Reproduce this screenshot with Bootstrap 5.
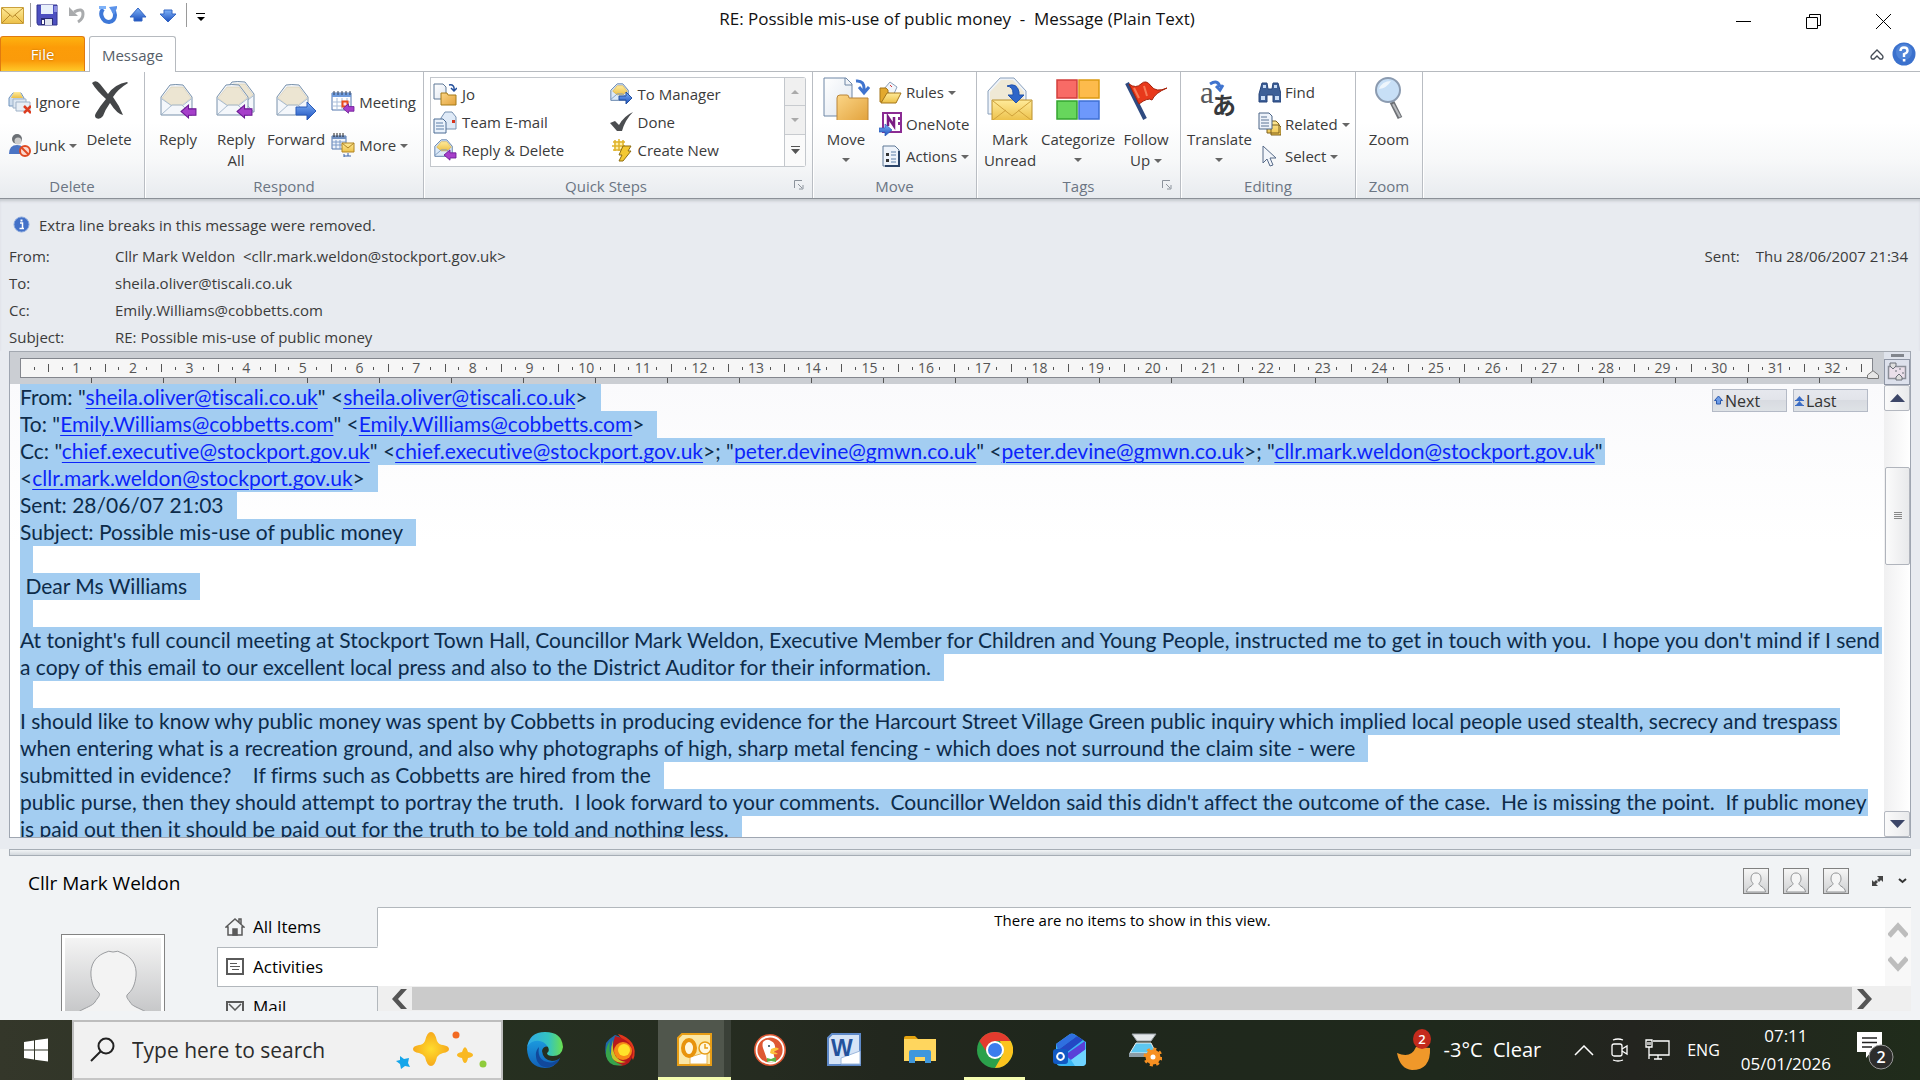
<!DOCTYPE html>
<html lang="en">
<head>
<meta charset="utf-8">
<meta name="viewport" content="width=device-width, initial-scale=1">
<title>RE: Possible mis-use of public money - Message (Plain Text)</title>
<link href="https://cdn.jsdelivr.net/npm/bootstrap@5.3.0/dist/css/bootstrap.min.css" rel="stylesheet">
<style>
body{font:15px/20px "Open Sans","Noto Sans",sans-serif;color:#3b3b3b;background:#fff;height:100vh;min-height:700px;overflow:hidden}
button{font:inherit;color:inherit;background:none;border:0;padding:0}
svg{display:block;flex:none}
.titlebar{height:36px}
.titlebar h1{font-size:17px;line-height:24px;color:#111;margin:0;padding:7px 6px 0 0}
.qat{padding:0 0 0 1px;height:30px;gap:5px}
.qat-tools{gap:10px;margin:0 3px 0 5px}
.qat i{width:1px;height:24px;background:#9a9a9a}
.win{padding-right:28px;padding-top:6px;gap:53px}
.tabs{height:36px;border-bottom:1px solid #b6babf}
.tab-file{width:85px;height:35px;color:#fff;border:1px solid #e07a10;border-bottom:0;border-radius:3px 3px 0 0;background:linear-gradient(#fdb310,#fc9c08 30%,#fb9b0a 70%,#ffc928);text-shadow:0 0 2px #a55a00}
.tab-msg{width:87px;height:36px;margin-left:4px;color:#565e69;background:#fff;border:1px solid #b6babf;border-bottom:0;border-radius:3px 3px 0 0}
.ribbon{height:127px;background:linear-gradient(#fff,#fff 40%,#f7f8f9 70%,#e8ebef);border-bottom:1px solid #8b9097}
.grp{border-right:1px solid #b9bdc3;box-shadow:1px 0 #fff}
.grp-label{height:22px;color:#6b7583;text-align:center;position:relative}
.launch{position:absolute;right:8px;top:4px}
.g-del{width:145px}.g-resp{width:279px}.g-quick{width:389px}.g-move{width:164px}.g-tags{width:204px}.g-edit{width:175px}.g-zoom{width:67px}
.big{min-width:58px;padding:4px 2px 0;line-height:21px}
.big svg{margin-bottom:9px}
.sm{gap:4px;height:32px;white-space:nowrap}
.two .sm{height:43px}
.two{padding-top:8px}.three{padding-top:4px}
.car{display:inline-block;border:4px solid transparent;border-top:4px solid #666;border-bottom:0;vertical-align:3px}
.gallery{padding:5px 0 0 6px}
.steps{border:1px solid #c3c7cc;background:#fff;height:90px;width:355px;padding:2px 0 0 2px}
.steps .sm{height:28px;width:50%;gap:5px}
.updown{width:21px;height:90px;border:1px solid #c3c7cc;border-left:0;border-radius:0 3px 3px 0}
.updown button{background:#f0f0f0;border-bottom:1px solid #c8cbcf}
.updown button:last-child{background:#fafafa;border:0}
.heads{background:#e8ebf0;box-shadow:inset 0 3px 3px -1px #c3c7cd;padding:12px 12px 0 9px}
.notice{height:27px;gap:9px;padding-left:4px}
.heads dl{margin:5px 0 0}
.heads dt{width:106px;font-weight:400;line-height:27px}
.heads dd{margin:0;line-height:26px;height:27px}
.reading{background:#e8ebf0;padding:0 9px 11px}
.frame{border:1px solid #9fa6b1;border-top-color:#a3a8b0}
.ruler{background:#cbced3;padding:6px 11px 0 10px;height:32px}
.scale{border:1px solid #83868d;background:#f6f6f6;height:20px;font-size:14px;line-height:17px;color:#555}
.scale span{flex:40 1 0;text-align:center;background:linear-gradient(#555,#555) 0 50%/1px 8px no-repeat,linear-gradient(#555,#555) 25% 50%/1px 3px no-repeat,linear-gradient(#555,#555) 75% 50%/1px 3px no-repeat}
.scale .lead-in{flex:19 1 0;background:linear-gradient(#555,#555) 50% 50%/1px 3px no-repeat}
.scale .lead-out{flex:8 1 0;background:linear-gradient(#555,#555) 0 50%/1px 8px no-repeat}
.tabstops{height:5px;margin-right:-11px;background:repeating-linear-gradient(90deg,transparent 0 71px,#555 71px 72px)}
.marker{position:absolute;right:5px;top:18px}
.mail{position:relative;flex:1 1 0;overflow:hidden;background:linear-gradient(#fafafc,#fff 160px);padding-left:10px;font:21px/26px Lato,sans-serif;font-variant-ligatures:none;color:#0d2b49;white-space:pre}
.mail p{margin:0;height:27px}
.mail mark{display:inline-block;height:27px;padding:0 13px 0 0;background:#a3cdf1;color:inherit;vertical-align:top}
.mail mark.full{padding-right:2px}
.mail a{color:#0b24fb;text-underline-offset:3px;text-decoration-thickness:1px}
.jump{position:absolute;right:16px;top:5px;gap:6px;font:16px/20px "Open Sans",sans-serif}
.jump button{width:75px;height:23px;border:1px solid #b4bac6;background:linear-gradient(#e6e8ee,#e2e4ea 45%,#d8dbe1 50%,#dee2e6);color:#333;padding-left:1px;gap:2px}
.side{width:26px;background:linear-gradient(90deg,#f0f0f1,#fff)}
.side .grip{height:7px;background:#dfe3ec}
.side .grip i{width:13px;height:3px;background:#82868d}
.side .toggle{height:26px;border:1px solid #8f96a5;background:#dde1ec}
.side .arrow{height:26px;border:1px solid #b4b8c0;border-radius:2px;background:linear-gradient(90deg,#fafafa,#e9eaec)}
.side .track{padding:56px 0 0 1px}
.side .thumb{height:98px;border:1px solid #b0b4bc;border-radius:2px;background:linear-gradient(90deg,#fbfbfb,#e8e9eb)}
.people{background:#f1f3f5;height:171px;padding:0 9px 9px}
.split{height:7px;flex:none;border:1px solid #a6adb5;background:linear-gradient(#f2f4f6,#d3d8dd)}
.who{height:51px;flex:none;padding:3px 0 0 19px;font-size:19px;color:#000}
.who-tools{gap:14px;padding:0 4px 4px 0}
.mini{width:26px;height:26px;border:1px solid #808080;background:linear-gradient(#f6f6f6,#cfd0d2)}
.photo-col{width:208px;padding:27px 0 0 52px}
.photo{width:104px;height:104px;border:1px solid #838383;background:#fff;padding:3px}
.side-tabs{width:161px;color:#000;font-size:17px}
.side-tabs button{height:40px;flex:none;border:1px solid transparent;border-right-color:#b2b7bc;padding-left:7px;gap:8px}
.side-tabs button.on{background:#fff;border-color:#b2b7bc;border-right-color:#fff}
.lower{min-height:0}
.feed{border-top:1px solid #b2b7bc;background:#fff;min-height:0}
.empty{color:#000;line-height:24px;padding-left:2px}
.vbar{width:26px;background:#f8f8f8;padding:12px 0}
.hbar{height:25px;flex:none;background:#efefef;padding:1px 39px 1px 13px;margin-left:-1px;border-left:1px solid #b2b7bc}
.hbar b{background:#cbcbcb;height:23px;margin:0 4px 0 5px}
.task{height:60px;background:linear-gradient(90deg,#34372a,#263020 25%,#252b20 40%,#22271e 46%,#1f271c 55%,#1f291c 75%,#23241f 85%,#202c1b);color:#fff}
.start{width:72px}
.find{width:431px;height:60px;border:2px solid #bdbdbd;border-bottom-color:#c6c6c6;background:#f1f1f1;padding:0 12px 0 15px}
.find input{border:0;background:none;outline:0;font-size:21px;color:#222;margin-left:15px;width:220px}
.find input::placeholder{color:#2b2b2b;opacity:1}
.app{width:75px;height:60px}
.pressed{background:linear-gradient(#50564c,#50564c) 1px 0/66px 100% no-repeat,linear-gradient(#3a4037,#3a4037) 67px 0/7px 100% no-repeat}
.pressed,.running{position:relative}
.pressed::after,.running::after{content:"";position:absolute;left:1px;right:1px;bottom:0;height:3px;background:#f5fcb0}
.running::after{left:7px;right:7px}
.weather{font-size:20px;gap:12px}
.clock{font-size:17px;line-height:28px;text-align:center}
.lang{font-size:16px}
.tray{gap:17px;padding-right:26px}
</style>
</head>
<body class="d-flex flex-column">
<svg width="0" height="0" class="position-absolute">
<defs>
<linearGradient id="gold" x2="0" y2="1"><stop stop-color="#ffeb9a"/><stop offset="1" stop-color="#ecc048"/></linearGradient>
<linearGradient id="tan" x2="1" y2="1"><stop stop-color="#fbd586"/><stop offset="1" stop-color="#e2a23c"/></linearGradient>
<linearGradient id="blue" x2="0" y2="1"><stop stop-color="#7fb2f8"/><stop offset="1" stop-color="#1c50bd"/></linearGradient>
<linearGradient id="pap" x2="1" y2="1"><stop stop-color="#fff"/><stop offset="1" stop-color="#dfe6f0"/></linearGradient>
<linearGradient id="bg1" x2="0" y2="1"><stop stop-color="#f4f4f4"/><stop offset="1" stop-color="#b9babc"/></linearGradient>
<symbol id="env" viewBox="0 0 40 40"><path d="M3 16 12 4q5-1 13 0l9 12v18H3z" fill="#f4f7fb" stroke="#7891ab"/><path d="M4 17 13 6h12l8 11-9 7H13z" fill="#ece5d2" stroke="#d3c9b0" stroke-width=".6"/><path d="M4 33 14 24h10l9 9M4 18l10 7M33 18l-9 7" fill="none" stroke="#a9bccf"/></symbol>
<symbol id="purp" viewBox="0 0 16 14"><path d="M1 7 8 1v3.500h7v6H8V13z" fill="#a63fca" stroke="#6b1a94"/></symbol>
<symbol id="minienv" viewBox="0 0 24 24"><path d="M2 9 9 2h6l6 7v11H2z" fill="#dbe9f8" stroke="#5b7ca6"/><path d="M4 10 9 4h6l5 6-5 4H9z" fill="url(#gold)" stroke="#d1a63a" stroke-width=".6"/><path d="m2 19 7-6h6l6 6" fill="none" stroke="#7f9cbf"/></symbol>
<symbol id="pers" viewBox="0 0 24 24"><path d="M12 4c-4 0-5 3-5 6 0 2 1 3 2 4.500 0 3-6 3-6.500 8.500h19c-.5-5.500-6.500-5.500-6.500-8.500 1-1.500 2-2.500 2-4.500 0-3-1-6-5-6z" fill="#f5f5f5" stroke="#909294"/></symbol>
<symbol id="ppl" viewBox="0 0 96 96"><rect width="96" height="96" fill="url(#bg1)"/><path d="M39 15q5-3 9-1 5-2 9 1c10 4 15 12 14 23-1 8-3 13-7 17-4 3-2 5 1 9 3 8 30 8 31 32H0c1-24 26-25 30-32 2-4 7-7 3-10-5-4-6-9-7-16-1-11 4-19 13-23z" fill="#f3f3f3" stroke="#9a9c9f"/></symbol>
</defs></svg>

<header class="titlebar d-flex align-items-start justify-content-between position-relative">
  <div class="qat d-flex align-items-center">
    <button aria-label="Message"><svg width="24" height="20"><path d="M.5 2.500h22v16H.5z" fill="url(#gold)" stroke="#caa03c"/><path d="m1 3 10.500 9L22 3M1 18l8-8m13 8-8-8" fill="none" stroke="#b98b2c"/></svg></button><i></i>
    <button aria-label="Save"><svg width="22" height="22"><path d="M1 1h20v20H2l-1-2z" fill="#4d50c0" stroke="#32358e"/><path d="M5 1h12v9H5z" fill="#e8f0fb"/><path d="M18 2h3v6h-3z" fill="#8b8ee0"/><path d="M5 14h12v7H5z" fill="#2a2c74"/><path d="M9 15h7v6H9z" fill="#dfe4ee"/><path d="M6 16h2v4H6z" fill="#fff"/></svg></button>
    <div class="qat-tools d-flex align-items-center">
    <button aria-label="Undo"><svg width="20" height="20"><path d="M6 7q9-5 9 2 0 5-5 8" fill="none" stroke="#a9abad" stroke-width="3"/><path d="M1 2v9h9z" fill="#a9abad"/></svg></button>
    <button aria-label="Redo"><svg width="20" height="20"><path d="M5 4q-3 4-1 8 2 5 7 5 6-1 6-7 0-3-2-5" fill="none" stroke="#3e78d8" stroke-width="4"/><path d="M19 1v2l-3 7-5-8z" fill="#5c93ea"/><path d="M1 1h7v3H1z" fill="#7fb2f8"/></svg></button>
    <button aria-label="Previous item"><svg width="20" height="18"><path d="m10 2 8 9h-4v4H6v-4H2z" fill="url(#blue)" stroke="#3566c4"/></svg></button>
    <button aria-label="Next item"><svg width="20" height="18"><path d="M10 16 2 8h4V4h8v4h4z" fill="url(#blue)" stroke="#3566c4"/></svg></button>
    </div><i></i>
    <button aria-label="Customize toolbar" class="ms-1 mt-1"><svg width="10" height="12"><path d="M0 2h9v1H0zM1 6h8L5 10z"/></svg></button>
  </div>
  <h1 class="position-absolute start-50 translate-middle-x fw-normal text-nowrap">RE: Possible mis-use of public money &nbsp;-&nbsp; Message (Plain Text)</h1>
  <div class="win d-flex">
    <button aria-label="Minimize"><svg width="17" height="30"><path d="M1 15.500h15" stroke="#000"/></svg></button>
    <button aria-label="Restore"><svg width="17" height="30" fill="none" stroke="#000"><path d="M1.500 11.500h11v11h-11zM4.500 11V8.500h11v11H13"/></svg></button>
    <button aria-label="Close"><svg width="17" height="30"><path d="m1 8 15 15M16 8 1 23" stroke="#000"/></svg></button>
  </div>
</header>

<nav class="tabs d-flex">
  <button class="tab-file">File</button><button class="tab-msg">Message</button>
  <div class="ms-auto d-flex align-items-center gap-2 pe-1">
    <button aria-label="Minimize the ribbon"><svg width="14" height="14" fill="none" stroke="#444b55" stroke-width="1.300"><path d="M4 12H2q-2-2 0-4l5-5 5 5q2 2 0 4h-2L7 9z"/></svg></button>
    <button aria-label="Help"><svg width="24" height="24"><circle cx="12" cy="12" r="11.500" fill="#3b71cd"/><circle cx="12" cy="10" r="8" fill="#5e91e0" opacity=".6"/><path d="M8.500 9q0-3.500 3.500-3.500t3.500 3.200q0 2-3.500 3.300V15" fill="none" stroke="#fff" stroke-width="2.400"/><path d="M10.800 17h2.600v2.500h-2.600z" fill="#fff"/></svg></button>
  </div>
</nav>

<section class="ribbon d-flex">
  <div class="grp g-del d-flex flex-column">
    <div class="d-flex flex-fill ps-2">
      <div class="two"><button class="sm d-flex align-items-center"><svg width="23" height="24"><path d="M1 8 5 3h8l3 5v8H1z" fill="#cfdded" stroke="#6e93bd"/><path d="M3 8 6 2h6l3 6z" fill="url(#gold)"/><path d="M5 9h13v9H5z" fill="#dfe8f2" stroke="#9fb2c8"/><path d="M8 12h14v9H8z" fill="#e8eef5" stroke="#9fb2c8"/><path d="m16 16 7 7m0-7-7 7" stroke="#dd3d20" stroke-width="2.500"/></svg>Ignore</button>
      <button class="sm d-flex align-items-center"><svg width="23" height="24"><circle cx="9" cy="6" r="5" fill="#6b6f74"/><circle cx="10" cy="8" r="3.500" fill="#ccc"/><path d="M1 21q0-9 8-9t7 9z" fill="#4b74c4"/><circle cx="17" cy="18" r="5" fill="#fbd9cf" stroke="#e04a22" stroke-width="2"/><path d="m13.500 14.500 7 7" stroke="#e04a22" stroke-width="2"/></svg><span>Junk <i class="car"></i></span></button></div>
      <button class="big d-flex flex-column align-items-center"><svg width="40" height="44"><path d="M3 7q4-4 8 1l8 10q7-10 19-12l1 1q-10 6-15 14 6 8 10 18-6-1-13-12-5 7-7 13-3 4-7 2-2-2 0-5 4-7 10-14Q7 14 3 7z" fill="#444648"/></svg>Delete</button>
    </div>
    <div class="grp-label">Delete</div>
  </div>
  <div class="grp g-resp d-flex flex-column">
    <div class="d-flex flex-fill ps-1">
      <button class="big d-flex flex-column align-items-center"><svg width="40" height="44" viewBox="0 -5 40 44"><use href="#env" width="40" height="40"/><use href="#purp" x="22" y="23" width="17" height="15"/></svg>Reply</button>
      <button class="big d-flex flex-column align-items-center"><svg width="40" height="44" viewBox="0 -5 40 44"><use href="#env" x="4" y="-3" width="40" height="40"/><use href="#env" x="-2" width="40" height="40"/><use href="#purp" x="20" y="23" width="17" height="15"/></svg>Reply<br>All</button>
      <button class="big d-flex flex-column align-items-center"><svg width="44" height="44" viewBox="0 -5 44 44"><use href="#env" width="40" height="40"/><path d="M22 26h11v-5l9 9-9 9v-5H22z" fill="url(#blue)" stroke="#2a5bb8"/></svg>Forward</button>
      <div class="two ms-1"><button class="sm d-flex align-items-center"><svg width="24" height="24"><path d="M1 3h19v17H1z" fill="#fff" stroke="#5277ae"/><path d="M1 3h19v4H1z" fill="#6f9bdc"/><path d="M3 1v4m4-4v4m4-4v4m4-4v4m4-4v4" stroke="#33435c"/><path d="M6 8v12m5-12v12m5-12v12M1 12h19M1 16h19" stroke="#a9bdd8"/><path d="M11.500 11.500h5v5h-5z" fill="#fde" stroke="#ea4c1c" stroke-width="2"/><use href="#purp" x="11" y="13" width="13" height="11"/></svg>Meeting</button>
      <button class="sm d-flex align-items-center"><svg width="24" height="24"><path d="M1 3h14v13H1z" fill="#eef3fa" stroke="#5277ae"/><path d="M1 3h14v3H1z" fill="#6f8fc0"/><path d="M3 0v4m3-4v4m3-4v4m3-4v4" stroke="#222"/><path d="M5 7v9m4-9v9M1 9h14M1 12h14" stroke="#7c9bc8"/><path d="M11 10h12v9H11z" fill="url(#gold)" stroke="#b08423"/><path d="m11 10 6 5 6-5" fill="none" stroke="#b08423"/><path d="M17 20v3h-4m0-2v3m4-1h3" stroke="#3a62a8" fill="none"/></svg><span>More <i class="car"></i></span></button></div>
    </div>
    <div class="grp-label">Respond</div>
  </div>
  <div class="grp g-quick d-flex flex-column">
    <div class="gallery d-flex flex-fill">
      <div class="steps d-flex flex-wrap align-content-start">
        <button class="sm d-flex align-items-center"><svg width="24" height="24"><path d="M1 2h9l3 3v12H1z" fill="url(#pap)" stroke="#5f7896"/><path d="M8 11h6l1 2h8v10H8z" fill="url(#tan)" stroke="#a57a18"/><path d="M16 3q6-1 5 6m-3-3 3 3 3-3" fill="none" stroke="#234f9c" stroke-width="1.500"/></svg>Jo</button>
        <button class="sm d-flex align-items-center"><svg width="24" height="24"><use href="#minienv" width="22" height="22"/><path d="M10 14h7v-4l6 6-6 6v-4h-7z" fill="url(#blue)" stroke="#24519f"/></svg>To Manager</button>
        <button class="sm d-flex align-items-center"><svg width="24" height="24"><path d="m8 8 4-6h7l4 5v12H8z" fill="#dfeaf7" stroke="#7791b0"/><path d="M19 10h3v3h-3z" fill="#d8341c"/><path d="M1 9h9l3 3v11H1z" fill="#eaf2fb" stroke="#4d6c94"/><path d="M3 13h7M3 16h8M3 19h8" stroke="#5c7ea8"/></svg>Team E-mail</button>
        <button class="sm d-flex align-items-center"><svg width="24" height="24"><path d="m1 13 5-2 4 4Q15 6 24 2q-8 8-11 19H8z" fill="#4b4d50"/></svg>Done</button>
        <button class="sm d-flex align-items-center"><svg width="24" height="24"><use href="#minienv" width="22" height="22"/><use href="#purp" x="10" y="11" width="14" height="12"/></svg>Reply &amp; Delete</button>
        <button class="sm d-flex align-items-center"><svg width="24" height="24"><path d="M5 3h10v9H5z" fill="#fff0a8"/><path d="M6 2v11m4-12v12m4-11v11M4 4h12M3 8h13M4 12h12" stroke="#e0b32c" stroke-width="1.500" fill="none"/><path d="M14 8h8l-3 5h3l-8 10h-4l3-6h-3z" fill="#f3c832" stroke="#8e6d10"/></svg>Create New</button>
      </div>
      <div class="updown d-flex flex-column">
        <button class="flex-fill d-flex align-items-center justify-content-center" aria-label="Scroll up"><svg width="8" height="4"><path d="M0 4h8L4 0z" fill="#aaa"/></svg></button>
        <button class="flex-fill d-flex align-items-center justify-content-center" aria-label="Scroll down"><svg width="8" height="4"><path d="M0 0h8L4 4z" fill="#aaa"/></svg></button>
        <button class="flex-fill d-flex align-items-center justify-content-center" aria-label="More quick steps"><svg width="9" height="8"><path d="M0 0h9v1H0zM0 3h9L4.500 8z" fill="#555"/></svg></button>
      </div>
    </div>
    <div class="grp-label pe-4">Quick Steps<svg class="launch" width="10" height="10" fill="none" stroke="#8c939c"><path d="M.5 8V.500H8M4 4l4 4M9 5v4H5"/></svg></div>
  </div>
  <div class="grp g-move d-flex flex-column">
    <div class="d-flex flex-fill ps-1">
      <button class="big d-flex flex-column align-items-center"><svg width="48" height="44"><path d="M2 2h22l6 6v32H2z" fill="url(#pap)" stroke="#6f87a6"/><path d="M23 2v7h7" fill="none" stroke="#6f87a6"/><path d="M15 22q0-3 3-3h7q2 0 2 3h19v23H15z" fill="url(#tan)" stroke="#b9853a"/><path d="M34 5q9-1 8 10m-5-4 5 6 5-6" fill="none" stroke="#3f74cf" stroke-width="3"/></svg>Move<i class="car mt-2"></i></button>
      <div class="three ms-1"><button class="sm d-flex align-items-center"><svg width="23" height="24"><path d="m5 9 6-7 7 5-4 9z" fill="#f2f6fb" stroke="#8ca0ba"/><path d="m11 5 2 2" stroke="#d33"/><path d="M1 8h6l2 2v12H1z" fill="#e3a92e" stroke="#a5761a"/><path d="m2 23 6-10h14l-5 10z" fill="url(#gold)" stroke="#a5761a"/></svg><span>Rules <i class="car"></i></span></button>
      <button class="sm d-flex align-items-center"><svg width="23" height="24"><path d="M4 1h18v19H4z" fill="#fff" stroke="#8b2b93" stroke-width="2"/><path d="M9 14V5l6 9V5" fill="none" stroke="#7a1b83" stroke-width="2.500"/><path d="M20 5v3m0 2v3" stroke="#8b2b93" stroke-width="2"/><path d="M0 16h6v-4l7 6-7 6v-4H0z" fill="url(#blue)" stroke="#2a5bb8" stroke-width=".7"/></svg>OneNote</button>
      <button class="sm d-flex align-items-center"><svg width="23" height="24"><path d="M4 2h12l4 4v16H4z" fill="#eef3fa" stroke="#5f7896"/><path d="M20 7v15H6" stroke="#2c4468" stroke-width="2" fill="none"/><path d="M7 9h3v3H7zM7 15h3v3H7z" fill="#333"/><path d="M12 8h5m-5 3h5m-5 4h5m-5 3h5" stroke="#5c7ea8"/></svg><span>Actions <i class="car"></i></span></button></div>
    </div>
    <div class="grp-label">Move</div>
  </div>
  <div class="grp g-tags d-flex flex-column">
    <div class="d-flex flex-fill ps-1">
      <button class="big d-flex flex-column align-items-center"><svg width="48" height="44"><path d="M2 15 14 2h14l12 13v23H2z" fill="#eef3f9" stroke="#8aa0bb"/><path d="M4 16 15 4h12l11 12v8H4z" fill="#efe9d6"/><path d="M6 24h40v21H6z" fill="url(#gold)" stroke="#b98e2a"/><path d="m7 25 19 15 19-15M7 44l13-10m25 10L32 34" fill="none" stroke="#cfa23c"/><path d="M21 10q10-4 12 6v3h5l-8 8-8-8h5v-2q0-6-6-7z" fill="#2f66c9" stroke="#2354ad"/></svg>Mark<br>Unread</button>
      <button class="big d-flex flex-column align-items-center"><svg width="46" height="44" stroke-width="1.500"><path d="M2 4h20v18H2z" fill="#f86b66" stroke="#d23f3c"/><path d="M24 4h20v18H24z" fill="#fdbb4c" stroke="#dc9a13"/><path d="M2 25h20v18H2z" fill="#67d65c" stroke="#35a52f"/><path d="M24 25h20v18H24z" fill="#6d98fb" stroke="#3e6fd4"/></svg>Categorize<i class="car mt-2"></i></button>
      <button class="big d-flex flex-column align-items-center"><svg width="44" height="44"><path d="m3 7 18 36" stroke="#2e4a80" stroke-width="4"/><path d="M5 8q7 5 12 0t10 2 16 2q-12 5-15 12-4-3-13 4z" fill="#e8391b" stroke="#a42008"/><path d="m10 12 5 10m5-12 3 10" stroke="#f77c58" stroke-width="2"/></svg>Follow<br><span>Up <i class="car"></i></span></button>
    </div>
    <div class="grp-label">Tags<svg class="launch" width="10" height="10" fill="none" stroke="#8c939c"><path d="M.5 8V.500H8M4 4l4 4M9 5v4H5"/></svg></div>
  </div>
  <div class="grp g-edit d-flex flex-column">
    <div class="d-flex flex-fill ps-1">
      <button class="big d-flex flex-column align-items-center"><svg width="40" height="44"><text x="1" y="27" font-family="Liberation Serif,serif" font-size="31" fill="#55585c">a</text><text x="13" y="38" font-family="Noto Sans CJK JP,sans-serif" font-weight="700" font-size="24" fill="#37393c">あ</text><path d="M11 8q8-5 10 3m-4-1 4 4 3-5" fill="none" stroke="#3f74cf" stroke-width="3"/></svg>Translate<i class="car mt-2"></i></button>
      <div class="three ms-1"><button class="sm d-flex align-items-center"><svg width="23" height="24"><path d="M4 3h5l1 6h4l1-6h5l3 11v8h-8v-7H9v7H1v-8z" fill="#3c5f97" stroke="#27457a"/><path d="M3 16h4v4H3zM17 16h4v4h-4zM5 5h3v3H5zM16 5h3v3h-3z" fill="#c9dcf5"/></svg>Find</button>
      <button class="sm d-flex align-items-center"><svg width="23" height="24"><path d="M9 9h9l3 3v9H9zM13 13h8l2 2v8H13z" fill="url(#gold)" stroke="#7d6120"/><path d="M1 1h10l3 3v13H1z" fill="#eef3fa" stroke="#4b6486"/><path d="M3 5h6M3 8h8m-8 3h8m-8 3h8" stroke="#5d7594"/></svg><span>Related <i class="car"></i></span></button>
      <button class="sm d-flex align-items-center"><svg width="23" height="24"><path d="M5 2v17l4-4 3 7 3-1-3-7h6z" fill="#f2f5fa" stroke="#566a88"/></svg><span>Select <i class="car"></i></span></button></div>
    </div>
    <div class="grp-label">Editing</div>
  </div>
  <div class="grp g-zoom d-flex flex-column">
    <div class="d-flex flex-fill ps-1">
      <button class="big d-flex flex-column align-items-center"><svg width="40" height="44"><path d="m23 26 8 16" stroke="#6d7075" stroke-width="5"/><path d="m24 28 7 13" stroke="#b9bbbe" stroke-width="2"/><circle cx="19" cy="14" r="12" fill="#c7dff6" stroke="#8b9bb0" stroke-width="2"/><path d="M10 13q3-8 12-8-4 7-12 8z" fill="#fff" opacity=".7"/></svg>Zoom</button>
    </div>
    <div class="grp-label">Zoom</div>
  </div>
</section>

<section class="heads">
  <div class="notice d-flex align-items-center"><svg width="17" height="17"><circle cx="8.500" cy="8.500" r="7.500" fill="#4371c8" stroke="#8aa8dc"/><path d="M7 7h2.500v5M6.500 12.500h4.500" fill="none" stroke="#fff" stroke-width="1.500"/><path d="M7.500 3.500h2v2h-2z" fill="#fff"/></svg><span>Extra line breaks in this message were removed.</span></div>
  <dl>
    <div class="d-flex"><dt>From:</dt><dd>Cllr Mark Weldon &nbsp;&lt;cllr.mark.weldon@stockport.gov.uk&gt;</dd><dt class="ms-auto w-auto me-3">Sent:</dt><dd>Thu 28/06/2007 21:34</dd></div>
    <div class="d-flex"><dt>To:</dt><dd>sheila.oliver@tiscali.co.uk</dd></div>
    <div class="d-flex"><dt>Cc:</dt><dd>Emily.Williams@cobbetts.com</dd></div>
    <div class="d-flex"><dt>Subject:</dt><dd>RE: Possible mis-use of public money</dd></div>
  </dl>
</section>

<main class="reading d-flex flex-column flex-fill">
 <div class="frame d-flex flex-fill">
  <div class="d-flex flex-column flex-fill">
    <div class="ruler position-relative"><div class="scale d-flex" id="scale"></div><div class="tabstops"></div>
      <svg class="marker" width="12" height="9"><path d="M.500 8.500V5L6 .700 11.500 5v3.500z" fill="#e6e6e6" stroke="#777"/></svg></div>
    <article class="mail"><p><mark>From: "<a href="#">sheila.oliver@tiscali.co.uk</a>" &lt;<a href="#">sheila.oliver@tiscali.co.uk</a>&gt;</mark></p><p><mark>To: "<a href="#">Emily.Williams@cobbetts.com</a>" &lt;<a href="#">Emily.Williams@cobbetts.com</a>&gt;</mark></p><p><mark class="full">Cc: "<a href="#">chief.executive@stockport.gov.uk</a>" &lt;<a href="#">chief.executive@stockport.gov.uk</a>&gt;; "<a href="#">peter.devine@gmwn.co.uk</a>" &lt;<a href="#">peter.devine@gmwn.co.uk</a>&gt;; "<a href="#">cllr.mark.weldon@stockport.gov.uk</a>"</mark></p><p><mark>&lt;<a href="#">cllr.mark.weldon@stockport.gov.uk</a>&gt;</mark></p><p><mark>Sent: 28/06/07 21:03</mark></p><p><mark>Subject: Possible mis-use of public money</mark></p><p><mark></mark></p><p><mark> Dear Ms Williams</mark></p><p><mark></mark></p><p><mark class="full">At tonight's full council meeting at Stockport Town Hall, Councillor Mark Weldon, Executive Member for Children and Young People, instructed me to get in touch with you.  I hope you don't mind if I send</mark></p><p><mark>a copy of this email to our excellent local press and also to the District Auditor for their information.</mark></p><p><mark></mark></p><p><mark class="full">I should like to know why public money was spent by Cobbetts in producing evidence for the Harcourt Street Village Green public inquiry which implied local people used stealth, secrecy and trespass</mark></p><p><mark>when entering what is a recreation ground, and also why photographs of high, sharp metal fencing - which does not surround the claim site - were</mark></p><p><mark>submitted in evidence?    If firms such as Cobbetts are hired from the</mark></p><p><mark class="full">public purse, then they should attempt to portray the truth.  I look forward to your comments.  Councillor Weldon said this didn't affect the outcome of the case.  He is missing the point.  If public money</mark></p><p><mark>is paid out then it should be paid out for the truth to be told and nothing less.</mark></p><div class="jump d-flex"><button class="d-flex align-items-center"><svg width="9" height="9"><path d="m4.500 0 4 4.500H6.500V8h-4V4.500H.500z" fill="#6d9be6" stroke="#2a58ad"/></svg>Next</button><button class="d-flex align-items-center"><svg width="9" height="10"><path d="M4.500 0 8 4H1zM4.500 5 8 9H1zM0 4h9v1H0zM0 9h9v1H0z" fill="#3a6cc4"/></svg>Last</button></div></article>
  </div>
  <div class="side d-flex flex-column">
    <div class="grip d-flex align-items-center justify-content-center"><i></i></div>
    <button class="toggle d-flex align-items-center justify-content-center" aria-label="Ruler"><svg width="20" height="20"><path d="M1.500 4.500h17v12h-17z" fill="#eadfea" stroke="#8b8f98" stroke-width="1.500"/><path d="M3 1h6v3L6 7 3 4zM9 18v-3l3-3 3 3v3z" fill="#ddd" stroke="#6c7079"/><path d="M12 7h2m2 3v2M8 9h2" stroke="#6c7079"/></svg></button>
    <button class="arrow d-flex align-items-center justify-content-center" aria-label="Scroll up"><svg width="15" height="8"><path d="M0 8h15L7.500 0z" fill="#3c4668"/></svg></button>
    <div class="track flex-fill"><div class="thumb d-flex align-items-center justify-content-center"><svg width="8" height="8"><path d="M0 .500h8M0 2.500h8M0 4.500h8M0 6.500h8" stroke="#888"/></svg></div></div>
    <button class="arrow d-flex align-items-center justify-content-center" aria-label="Scroll down"><svg width="15" height="8"><path d="M0 0h15L7.500 8z" fill="#3c4668"/></svg></button>
  </div>
 </div>
</main>

<section class="people d-flex flex-column">
  <div class="split"></div>
  <div class="who d-flex align-items-center"><span>Cllr Mark Weldon</span>
    <div class="who-tools ms-auto d-flex align-items-center">
      <svg class="mini" viewBox="0 0 24 24"><use href="#pers"/></svg><svg class="mini" viewBox="0 0 24 24"><use href="#pers"/></svg><svg class="mini me-2" viewBox="0 0 24 24"><use href="#pers"/></svg>
      <button aria-label="Expand"><svg width="13" height="12" fill="#444"><path d="M6 1h6v6l-2-2-2 2-2-2 2-2zM1 5l2 2 2-2 2 2-2 2 2 2H1z"/></svg></button>
      <button aria-label="Options"><svg width="9" height="6"><path d="m1 1 3.500 3L8 1" fill="none" stroke="#333" stroke-width="2"/></svg></button>
    </div></div>
  <div class="lower d-flex flex-fill overflow-hidden">
    <div class="photo-col"><div class="photo"><svg width="96" height="96"><use href="#ppl"/></svg></div></div>
    <div class="side-tabs d-flex flex-column">
      <button class="d-flex align-items-center"><svg width="20" height="20" fill="none" stroke="#5a5a5a" stroke-width="1.500"><path d="M1 10 10 2l9 8h-2v8H3v-8zM14 5V2h2v5"/><path d="M8 12h4v6H8z" fill="#5a5a5a"/></svg>All Items</button>
      <button class="on d-flex align-items-center"><svg width="20" height="20" fill="none" stroke="#5a5a5a"><path d="M2 2h16v15H2z" stroke-width="2"/><path d="M5 6.500h7M5 9.500h10M7 12.500h7"/></svg>Activities</button>
      <button class="d-flex align-items-center"><svg width="20" height="20" fill="none" stroke="#5a5a5a"><path d="M2 5h16v12H2z" stroke-width="2"/><path d="m4 7 6 6 6-6" stroke-width="1.500"/></svg>Mail</button>
    </div>
    <div class="d-flex flex-column flex-fill">
      <div class="feed d-flex flex-fill"><div class="empty flex-fill text-center">There are no items to show in this view.</div>
        <div class="vbar d-flex flex-column justify-content-between align-items-center"><svg width="20" height="18" fill="none" stroke="#bdbdbd" stroke-width="5"><path d="m1 16 9-10 9 10"/></svg><svg width="20" height="18" fill="none" stroke="#bdbdbd" stroke-width="5"><path d="m1 2 9 10 9-10"/></svg></div></div>
      <div class="hbar d-flex align-items-center"><svg width="16" height="20"><path d="M10 0h6L7 10l9 10h-6L1 10z" fill="#555"/></svg><b class="flex-fill"></b><svg width="16" height="20"><path d="M7 0H1l9 10-9 10h6l9-10z" fill="#555"/></svg></div>
    </div>
  </div>
</section>

<footer class="task d-flex align-items-center">
  <button class="start d-flex justify-content-center" aria-label="Start"><svg width="24" height="24" fill="#fff"><path d="M0 4l10-1.500V11.500H0zM11 2.300 24 .500v11H11zM0 12.500h10v9L0 20zM11 12.500h13v11l-13-1.800z"/></svg></button>
  <label class="find d-flex align-items-center"><svg width="26" height="26" fill="none" stroke="#222" stroke-width="2"><circle cx="17" cy="9" r="7.500"/><path d="M11.500 14.500 2 24"/></svg><input type="text" placeholder="Type here to search" aria-label="Search">
    <svg class="ms-auto" width="94" height="40"><defs><radialGradient id="star"><stop stop-color="#ffdc2e"/><stop offset="1" stop-color="#f6a91c"/></radialGradient></defs><path d="M36 2q4 0 6 9 2 4 6 4 6 1 6 4t-6 4q-4 1-6 4-2 9-6 9t-6-9q-2-3-6-4-6-1-6-4t6-4q4 0 6-4 2-9 6-9z" fill="url(#star)"/><path d="M70 17q2 1 3 5 5 1 5 3t-5 3q-1 5-3 5t-3-5q-5-1-5-3t5-3q1-4 3-5z" fill="#f9b822"/><path d="m5 26 4 3 5-1-1 5 2 4-5-1-4 3-1-5-4-3 4-1z" fill="#14a5ea"/><circle cx="61" cy="5" r="3.500" fill="#f26a22"/><circle cx="88" cy="34" r="3.500" fill="#8fcb3c"/></svg></label>
  <nav class="d-flex ms-1">
    <button class="app d-flex align-items-center justify-content-center" aria-label="Edge"><svg width="36" height="36" viewBox="0 0 36 36"><defs><linearGradient id="eg" x2="1"><stop stop-color="#2fa8e8"/><stop offset=".6" stop-color="#34c4c0"/><stop offset="1" stop-color="#6be04e"/></linearGradient><linearGradient id="eb" x2="0" y2="1"><stop stop-color="#1c9de0"/><stop offset="1" stop-color="#1160b8"/></linearGradient></defs><path d="M0 17Q1 5 10 7q12 1 13 8-7-2-8 4 1 9 10 10 5 0 8-3-5 10-15 10Q1 35 0 17z" fill="url(#eb)"/><path d="M12 15q-2 10 5 14 9 4 16-3-2 6-8 8-10 4-15-5-3-9 2-14z" fill="#11489b"/><path d="M0 16Q2 0 18 0q17 0 18 15-1 9-10 9-6 0-6-3 3-2 1-6Q15 6 5 10q-4 2-5 6z" fill="url(#eg)"/></svg></button>
    <button class="app d-flex align-items-center justify-content-center" aria-label="Media"><svg width="34" height="34"><path d="M3 10q4-5 9-8 9 2 6 9L10 30Q0 26 3 10z" fill="#1e69ad"/><path d="M15 1q9 2 14 9 5 8 1 17-8-17-15-26z" fill="#e1361c"/><path d="M12 3q18 4 18 18-2 11-12 12Q4 30 12 3z" fill="#b9181c"/><path d="M7 8q-3 20 13 24-14 3-17-9-1-8 4-15z" fill="#37a44c"/><path d="M10 7q-2 20 13 22-13 3-15-8 0-8 2-14z" fill="#c7c82a"/><circle cx="20" cy="18" r="9" fill="#f78a17"/><circle cx="21" cy="17" r="6" fill="#ffe22a"/></svg></button>
    <button class="app pressed d-flex align-items-center justify-content-center" aria-label="Outlook"><svg width="36" height="34"><path d="M5 1h29v31H1V5z" fill="#fbe7a6" stroke="#e79d16" stroke-width="2"/><path d="m13 24 17-5v12H13z" fill="#fff" stroke="#e7b450"/><ellipse cx="12" cy="15" rx="6" ry="8" fill="#fff6dc" stroke="#e8930c" stroke-width="4"/><circle cx="28" cy="15" r="6" fill="#fff8e0" stroke="#e79d16" stroke-width="1.500"/><path d="M28 11v4h3" fill="none" stroke="#e79d16" stroke-width="1.500"/></svg></button>
    <button class="app d-flex align-items-center justify-content-center" aria-label="DuckDuckGo"><svg width="34" height="34"><circle cx="17" cy="17" r="16" fill="#de5833"/><circle cx="17" cy="17" r="13.500" fill="none" stroke="#fff" stroke-width="1.800"/><path d="M10 9q4-4 8-1 5 2 4 9-2 2-1 6l2 6q-4 1-8 0L10 15q-1-3 0-6z" fill="#fff"/><path d="M18 16q6-3 8 0-3 2-6 3 3 0 5 2-5 1-8-1z" fill="#fdc33b"/><path d="m14 25 4 1 5-2v5l-5-1-4 1z" fill="#5fb247"/><circle cx="16" cy="13" r="1" fill="#245"/></svg></button>
    <button class="app d-flex align-items-center justify-content-center" aria-label="Word"><svg width="36" height="34"><path d="M5 1h28v31H1V5z" fill="#d5e3f6" stroke="#5e89c8" stroke-width="2"/><path d="m14 25 19-7v13H14z" fill="#fff" stroke="#9db8dc"/><text x="4" y="23" font-family="Liberation Sans,sans-serif" font-weight="700" font-size="23" fill="#24529c">W</text></svg></button>
    <button class="app d-flex align-items-center justify-content-center" aria-label="File Explorer"><svg width="34" height="30"><path d="M1 3q0-2 2-2h9l3 3H1z" fill="#e5a410"/><path d="M1 4h32v22H1z" fill="#ffd65e"/><path d="M6 28V17q0-2 2-2h18q2 0 2 2v11h-6v-6H12v6z" fill="#3f97dc"/></svg></button>
    <button class="app running d-flex align-items-center justify-content-center" aria-label="Chrome"><svg width="36" height="36"><circle cx="18" cy="18" r="18" fill="#2ba14b"/><path d="M2.400 9A18 18 0 0 1 33.600 9H18L11 22z" fill="#e33b2e"/><path d="M33.600 9A18 18 0 0 1 18 36l8-14-3-13z" fill="#fcc31e"/><circle cx="18" cy="18" r="9" fill="#fff"/><circle cx="18" cy="18" r="7" fill="#3b7ded"/></svg></button>
    <button class="app d-flex align-items-center justify-content-center" aria-label="New Outlook"><svg width="34" height="34"><path d="M3 11 17 1q2-1 4 0l12 8v20q0 4-4 4H8q-5 0-5-5z" fill="#3ab6f4"/><path d="M3 11 17 1q3-1 7 2L5 17z" fill="#2f6fe0"/><path d="M5 17 24 3l6 4L9 23z" fill="#2348c4"/><path d="M12 22 32 8v9L18 27z" fill="#5a3fd8"/><path d="M18 27 33 16v13q0 4-4 4h-7z" fill="#6fd3ff"/><rect y="16" width="15" height="15" rx="3" fill="#1159c4"/><circle cx="7.500" cy="23.500" r="3.400" fill="none" stroke="#fff" stroke-width="2"/></svg></button>
    <button class="app d-flex align-items-center justify-content-center" aria-label="Scanner"><svg width="34" height="34"><path d="M4 1h24l-5 7H9z" fill="#e4e8ea" stroke="#9aa2a8"/><path d="M8 10h15l5 10H2z" fill="#5cc6f0" stroke="#eee"/><path d="M1 20h20v4H1z" fill="#8c9ca6"/><circle cx="25" cy="24" r="5" fill="#fff" stroke="#f79022" stroke-width="5"/><circle cx="25" cy="24" r="8" fill="none" stroke="#f79022" stroke-width="3" stroke-dasharray="3 3.280"/></svg></button>
  </nav>
  <div class="tray ms-auto d-flex align-items-center h-100">
    <button class="weather d-flex align-items-center"><svg width="36" height="42"><path d="M1 24q14 6 19-6l14 1q1 22-18 22Q4 40 1 24z" fill="#f0982a"/><ellipse cx="26" cy="10" rx="9" ry="10" fill="#c42b1c"/><text x="26" y="15" text-anchor="middle" font-family="Open Sans,sans-serif" font-weight="600" font-size="13" fill="#fff">2</text></svg><span>-3°C &nbsp;Clear</span></button>
    <button class="ms-3" aria-label="Show hidden icons"><svg width="20" height="11" fill="none" stroke="#fff" stroke-width="1.500"><path d="m1 10 9-9 9 9"/></svg></button>
    <svg width="17" height="24" fill="none" stroke="#fff" stroke-width="1.300"><rect x="1" y="6" width="10" height="12" rx="2"/><path d="m11 11 5-3v8l-5-3M2 2q5-2 10 0M2 22q5 2 10 0"/></svg>
    <svg width="25" height="22" fill="none" stroke="#fff" stroke-width="1.300"><path d="M8 2h16v14H4V9M1 1h6v7H1zM4 8v12M9 20h8M13 16v4M3 3v3m2-3v3"/></svg>
    <span class="lang">ENG</span>
    <div class="clock ms-1">07:11<br>05/01/2026</div>
    <button class="ms-2" aria-label="Notifications"><svg width="38" height="40"><path d="M1 2h25v20H15l-5 6v-6H1z" fill="#fff"/><path d="M6 8h15M6 12.500h15M6 17h10" stroke="#222" stroke-width="1.500"/><circle cx="25" cy="27" r="12" fill="#2d2d2b" stroke="#999"/><text x="25" y="33" text-anchor="middle" font-family="Open Sans,sans-serif" font-weight="600" font-size="16" fill="#fff">2</text></svg></button>
  </div>
</footer>
<script>
// The ruler counts centimetres from the left margin of the page.
var scale = document.getElementById('scale'), html = '<span class="lead-in"></span>';
for (var n = 1; n <= 32; n++) html += '<span>' + n + '</span>';
scale.innerHTML = html + '<span class="lead-out"></span>';
</script>
<script src="https://cdn.jsdelivr.net/npm/bootstrap@5.3.0/dist/js/bootstrap.bundle.min.js"></script>
</body>
</html>
